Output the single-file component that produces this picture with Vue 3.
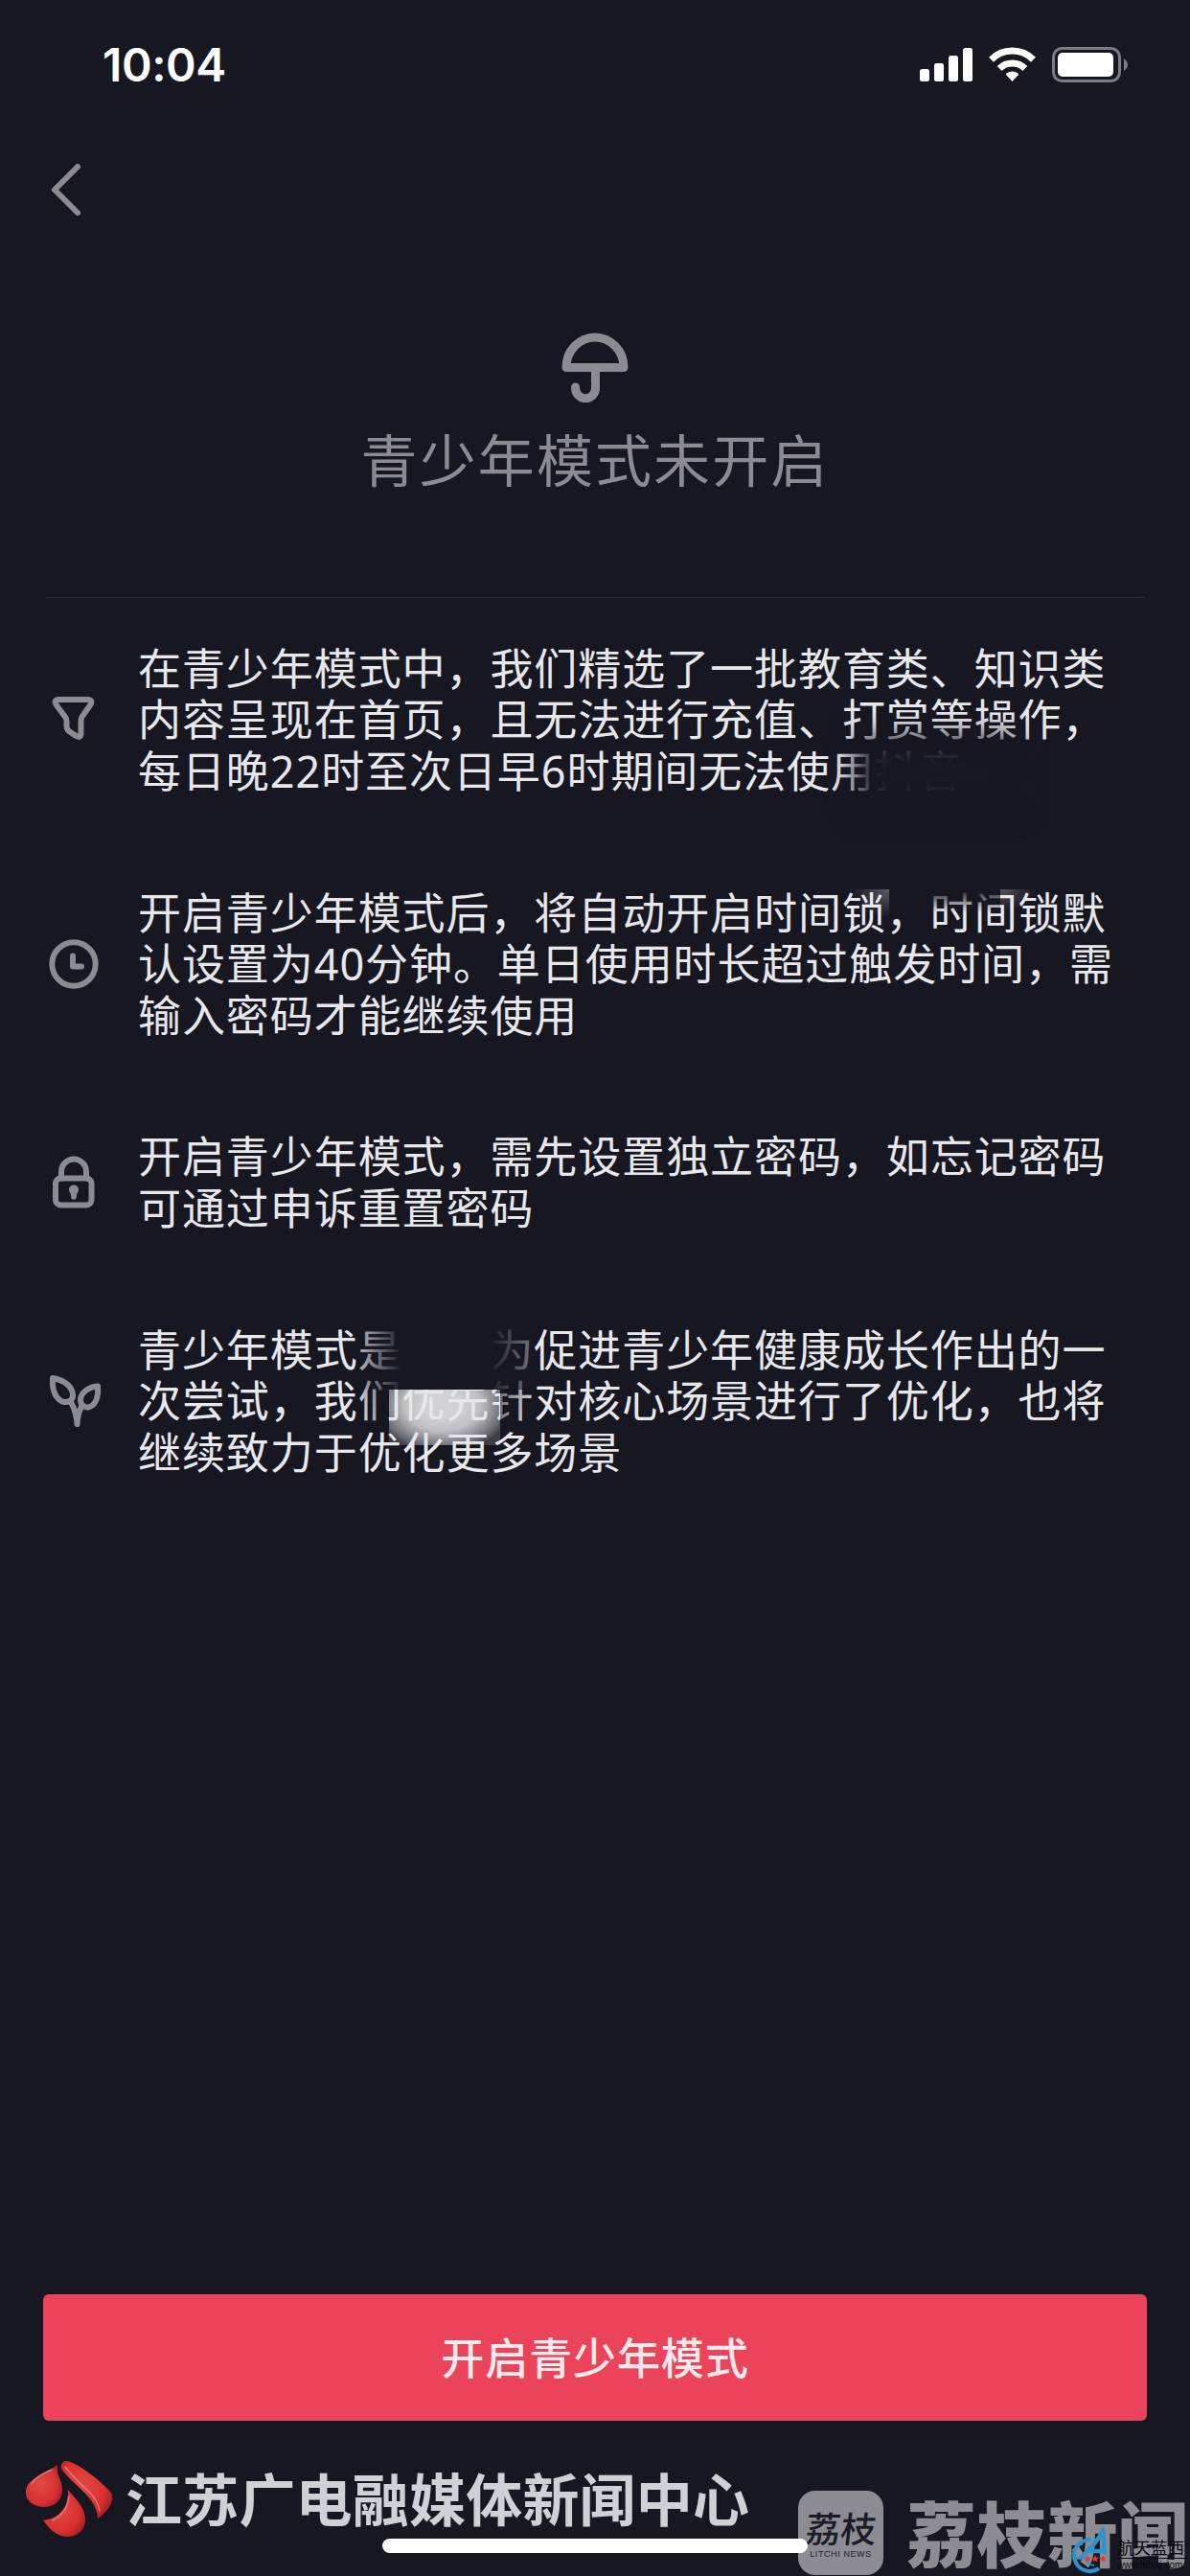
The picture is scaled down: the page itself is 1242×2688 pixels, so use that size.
<template>
  <div class="page">
    <!-- 状态栏 -->
    <header class="status-bar">
      <span class="time">10:04</span>
      <svg class="status-icons" viewBox="0 0 220 40" width="220" height="40">
        <g fill="#fff">
          <rect x="0" y="24" width="10" height="13" rx="2.5" />
          <rect x="15" y="18" width="10" height="19" rx="2.5" />
          <rect x="30" y="10" width="10" height="27" rx="2.5" />
          <rect x="45" y="2" width="10" height="35" rx="2.5" />
          <path d="M96.5 37 L90.3 30.3 Q89.6 29.4 90.6 28.6 A9.5 9.5 0 0 1 102.4 28.6 Q103.4 29.4 102.7 30.3 Z" />
        </g>
        <g fill="none" stroke="#fff" stroke-width="7">
          <path d="M74.5 14.2 A31 31 0 0 1 118.5 14.2" />
          <path d="M83.2 23.4 A19 19 0 0 1 109.8 23.4" />
        </g>
        <rect x="139.5" y="2.5" width="69" height="34" rx="9" fill="none" stroke="#7c7c84" stroke-width="3" />
        <rect x="144" y="7" width="58" height="25" rx="5" fill="#fff" />
        <path d="M213 13 Q217 16 217 19.5 Q217 23 213 26 Z" fill="#7c7c84" />
      </svg>
    </header>

    <nav class="nav-bar">
      <svg class="back" viewBox="0 0 40 60" width="40" height="60">
        <path d="M33 6 L9 30 L33 54" />
      </svg>
    </nav>

    <!-- 标题 -->
    <section class="hero">
      <svg class="umbrella" viewBox="0 0 80 80" width="80" height="80">
        <path d="M10 43.500 A30 31.500 0 0 1 70 43.500 Z" />
        <path d="M40.500 44 V65 A10.300 10.500 0 0 1 19.600 65 V64" />
      </svg>
      <h1>青少年模式未开启</h1>
    </section>

    <!-- 说明列表 -->
    <ul class="rules">
      <li v-for="rule in rules" :key="rule.icon" class="rule">
        <svg class="rule-icon" viewBox="0 0 60 60" width="60" height="60">
          <path
            v-if="rule.icon === 'filter'"
            d="M14 9 H45 Q50.500 9.500 47 15 L38.500 27 Q37.500 29 37.500 31 V45 Q37 49.500 32.500 47 L25 42 Q22.500 40 22.500 37 V31 Q22.500 29 21 27 L12 15 Q8.500 9.500 14 9 Z"
          />
          <template v-else-if="rule.icon === 'clock'">
            <circle cx="30" cy="30" r="22.700" />
            <path d="M29 21.500 V32.500 H38" />
          </template>
          <template v-else-if="rule.icon === 'lock'">
            <rect x="11" y="25.500" width="37.500" height="28" rx="5.500" />
            <path d="M17 25.500 V18.500 A13 13 0 0 1 43 18.500 V25.500" />
            <path class="solid" d="M30 32.500 a4.900 4.900 0 0 1 3.500 8.400 L32.500 46.500 Q30 49 27.500 46.500 L26.500 40.900 A4.900 4.900 0 0 1 30 32.500 Z" />
          </template>
          <template v-else>
            <path d="M8 6 C20 8 29 15 29 24 C29 30 24 31.500 20 31 C11 29 7 18 8 6 Z" />
            <path d="M55 14.500 C45 15 37 22 37 29 C37 34 41 37 45 36.500 C53 35 56 25 55 14.500 Z" />
            <path d="M27 31 Q33 42 33.500 54 M38 36 Q34 43 33.500 54" />
          </template>
        </svg>
        <p class="rule-text">
          <span v-for="line in rule.lines" :key="line" class="line">{{ line }}</span>
        </p>
        <i v-for="patch in rule.patches" :key="patch" class="patch" :class="patch"></i>
      </li>
    </ul>

    <button class="submit">开启青少年模式</button>

    <footer class="footer">
      <svg class="drops" viewBox="0 0 94 84" width="94" height="84">
        <defs>
          <radialGradient id="drop" cx="40%" cy="45%" r="65%">
            <stop offset="0" stop-color="#e04a48" />
            <stop offset="0.7" stop-color="#d9302f" />
            <stop offset="1" stop-color="#a81f25" />
          </radialGradient>
        </defs>
        <g fill="url(#drop)">
          <path d="M35 6 C33 18 41 22 40 34 C39 45 29 51 19 50 C8 49 1 42 2 33 C3 22 17 18 35 6 Z" />
          <path d="M39 6 C40 1 45 1 51 4 C65 11 80 23 90 34 Q93 37 92 43 C90 51 83 58 77 62 C76 40 54 29 42 14 Q38 10 39 6 Z" />
          <path d="M46 32 C55 43 65 52 64 65 C63 75 55 81 45 81 C34 81 26 72 20 64 C36 62 47 52 46 32 Z" />
        </g>
        <g class="shine">
          <path d="M8 26 Q12 18 29 11" />
          <path d="M43 8 Q55 23 68 34 Q77 43 79 54" />
          <path d="M47 39 Q45 56 30 64" />
        </g>
      </svg>
      <span class="center-name">江苏广电融媒体新闻中心</span>
    </footer>

    <!-- 右下角水印 -->
    <div class="litchi">
      <div class="litchi-badge">
        <span class="litchi-cn">荔枝</span>
        <span class="litchi-en">LITCHI NEWS</span>
      </div>
      <span class="litchi-name">荔枝新闻</span>
    </div>
    <div class="source">
      <svg viewBox="0 0 42 48" width="42" height="48">
        <g fill="none" stroke="#2a93d0">
          <path d="M22 13 A16.500 16.500 0 1 0 30 43" stroke-width="4" />
          <path d="M20 20 A11 11 0 0 0 25 40" stroke-width="1.500" />
          <path d="M9 33 Q24 22 34 4 L36 28 M20 25 H36" stroke-width="4.500" />
        </g>
        <g fill="#e5392f">
          <path v-for="x in [18, 26, 34]" :key="x" :transform="`translate(${x} 33)`" :d="star" />
        </g>
      </svg>
      <div class="source-text">
        <span class="source-cn">航天蓝西</span>
        <span class="source-url">www.htlxkj.com</span>
      </div>
    </div>

    <div class="home-indicator"></div>
  </div>
</template>

<script setup>
const star = "M0 -4 L1.1 -1.2 L4 -1.2 L1.7 0.7 L2.5 3.5 L0 1.8 L-2.5 3.5 L-1.7 0.7 L-4 -1.2 L-1.1 -1.2 Z";

const rules = [
  {
    icon: "filter",
    lines: [
      "在青少年模式中，我们精选了一批教育类、知识类",
      "内容呈现在首页，且无法进行充值、打赏等操作，",
      "每日晚22时至次日早6时期间无法使用抖音",
    ],
    patches: ["fade-brand"],
  },
  {
    icon: "clock",
    lines: [
      "开启青少年模式后，将自动开启时间锁，时间锁默",
      "认设置为40分钟。单日使用时长超过触发时间，需",
      "输入密码才能继续使用",
    ],
    patches: ["glow-left", "glow-right", "fade-top"],
  },
  {
    icon: "lock",
    lines: ["开启青少年模式，需先设置独立密码，如忘记密码", "可通过申诉重置密码"],
    patches: [],
  },
  {
    icon: "sprout",
    lines: [
      "青少年模式是抖音为促进青少年健康成长作出的一",
      "次尝试，我们优先针对核心场景进行了优化，也将",
      "继续致力于优化更多场景",
    ],
    patches: ["block-light", "fade-name", "fade-side-left", "fade-side-right"],
  },
];
</script>

<style>
body {
  background: #171722;
}
</style>

<style scoped>
.page {
  position: relative;
  display: flex;
  flex-direction: column;
  width: 1242px;
  height: 2688px;
  overflow: hidden;
  background: #171722;
  color: #e8e8ea;
  font-family: "Noto Sans", "Noto Sans CJK SC", sans-serif;
}

/* 状态栏 */
.status-bar {
  display: flex;
  align-items: center;
  justify-content: space-between;
  height: 136px;
  padding: 0 62px 0 107px;
}

.time {
  color: #fff;
  font-family: Inter, sans-serif;
  font-size: 48px;
  font-weight: 600;
  line-height: 60px;
  letter-spacing: -0.4px;
}

.nav-bar {
  height: 124px;
  padding: 32px 48px 0;
  box-sizing: border-box;
}

.back {
  display: block;
  fill: none;
  stroke: #8b8b91;
  stroke-width: 6;
  stroke-linecap: round;
  stroke-linejoin: round;
}

/* 标题区 */
.hero {
  display: flex;
  flex-direction: column;
  align-items: center;
  height: 364px;
  box-sizing: border-box;
  padding-top: 80px;
  margin: 0 48px;
  border-bottom: 1px solid #2b2b35;
}

.umbrella {
  fill: none;
  stroke: #8b8b91;
  stroke-width: 9;
  stroke-linecap: round;
  stroke-linejoin: round;
}

h1 {
  margin: 20px 0 0;
  color: #8b8b91;
  font-size: 59px;
  font-weight: 400;
  line-height: 80px;
  letter-spacing: 2.1px;
}

/* 说明列表 */
.rules {
  display: flex;
  flex-direction: column;
  gap: 94.5px;
  margin: 0;
  padding: 47px 40px 0 47px;
  list-style: none;
}

.rule {
  position: relative;
  display: flex;
  align-items: center;
  gap: 37px;
}

.rule-icon {
  flex-shrink: 0;
  fill: none;
  stroke: #8b8b91;
  stroke-width: 6;
  stroke-linecap: round;
  stroke-linejoin: round;
}

.solid {
  fill: #8b8b91;
  stroke: none;
}

.rule-text {
  position: relative;
  z-index: 1;
  margin: 0;
  font-size: 45px;
  line-height: 53.4px;
  letter-spacing: 0.93px;
  white-space: nowrap;
}

.line {
  display: block;
}

/* 文字上的遮挡块 */
.patch {
  position: absolute;
  z-index: 2;
}

.fade-brand {
  left: 846px;
  top: 98px;
  width: 170px;
  height: 76px;
  background: #171722;
  filter: blur(14px);
}

.glow-left {
  left: 843px;
  top: 2px;
  width: 38px;
  height: 28px;
  z-index: 0;
  background: radial-gradient(ellipse at 100% 0, #5c5c63, transparent 75%);
}

.glow-right {
  left: 997px;
  top: 2px;
  width: 34px;
  height: 22px;
  z-index: 0;
  background: radial-gradient(ellipse at 0 0, #55555c, transparent 75%);
}

.fade-top {
  left: 905px;
  top: 0;
  width: 92px;
  height: 26px;
  background: linear-gradient(rgba(23, 23, 34, 0.85) 20%, rgba(23, 23, 34, 0));
}

.block-light {
  left: 359px;
  top: 68px;
  width: 116px;
  height: 58px;
  z-index: 0;
  background: radial-gradient(ellipse 62% 85% at 48% 28%, #d2d2d5 25%, #c0c0c4 55%, #6b6b72 88%, #3d3d46 100%);
}

.fade-name {
  left: 325px;
  top: 0;
  width: 185px;
  height: 68px;
  background: linear-gradient(90deg, rgba(23, 23, 34, 0.2), #171722 26%, #171722 74%, rgba(23, 23, 34, 0.55));
}

.fade-side-left {
  left: 325px;
  top: 68px;
  width: 34px;
  height: 44px;
  background: linear-gradient(80deg, rgba(23, 23, 34, 0), rgba(23, 23, 34, 0.6));
}

.fade-side-right {
  left: 475px;
  top: 68px;
  width: 34px;
  height: 44px;
  background: linear-gradient(100deg, rgba(23, 23, 34, 0.6), rgba(23, 23, 34, 0));
}

/* 底部按钮 */
.submit {
  height: 132px;
  margin: auto 45px 0;
  padding: 0 0 3px;
  border: none;
  border-radius: 6px;
  background: #eb4359;
  color: #ffe9ec;
  font-family: "Noto Sans CJK SC", sans-serif;
  font-size: 45px;
  font-weight: 500;
  letter-spacing: 0.9px;
}

.footer {
  display: flex;
  align-items: flex-start;
  gap: 12px;
  height: 162px;
  box-sizing: border-box;
  padding: 40px 0 0 25px;
}

.shine {
  fill: none;
  stroke: #f08a86;
  stroke-width: 1.5;
  stroke-linecap: round;
  opacity: 0.75;
}

.center-name {
  color: #d0d1d4;
  font-family: "Noto Sans CJK SC", sans-serif;
  font-size: 59px;
  font-weight: 700;
  line-height: 80px;
  letter-spacing: 0.2px;
  white-space: nowrap;
}

/* 荔枝新闻水印 */
.litchi {
  position: absolute;
  left: 833px;
  top: 2599px;
  display: flex;
  align-items: center;
  gap: 24px;
  color: #8d8c93;
  white-space: nowrap;
}

.litchi-badge {
  display: flex;
  flex-direction: column;
  align-items: center;
  width: 89px;
  height: 88px;
  box-sizing: border-box;
  padding-top: 18px;
  border-radius: 18px;
  background: #8d8c93;
  color: #1c1c26;
}

.litchi-cn {
  font-family: "Noto Sans CJK SC", sans-serif;
  font-size: 37px;
  font-weight: 500;
  line-height: 40px;
  transform: skewX(-6deg);
}

.litchi-en {
  margin-top: 3px;
  font-family: "Liberation Sans", sans-serif;
  font-size: 9px;
  line-height: 10px;
  letter-spacing: 0.6px;
}

.litchi-name {
  margin-top: -5px;
  font-family: "Noto Sans CJK SC", sans-serif;
  font-size: 73.5px;
  font-weight: 900;
  line-height: 84px;
}

/* 来源水印 */
.source {
  position: absolute;
  left: 1117px;
  top: 2637px;
  display: flex;
  gap: 7px;
}

.source-text {
  display: flex;
  flex-direction: column;
  width: 72px;
  padding-top: 10px;
  color: #08080c;
  white-space: nowrap;
}

.source-cn {
  border-bottom: 1px solid #08080c;
  font-family: "Noto Sans CJK SC", sans-serif;
  font-size: 17.5px;
  line-height: 22px;
}

.source-url {
  font-family: "Liberation Sans", sans-serif;
  font-size: 10px;
  line-height: 13px;
}

.home-indicator {
  position: absolute;
  left: 399px;
  top: 2649px;
  width: 444px;
  height: 15px;
  border-radius: 8px;
  background: #fff;
}
</style>
